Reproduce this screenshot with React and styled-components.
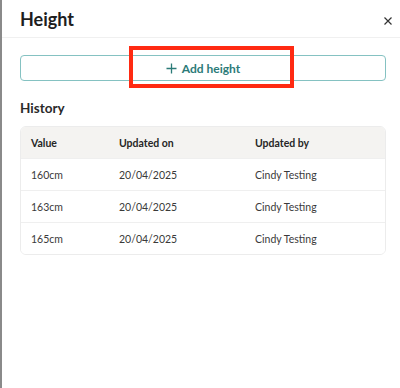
import React from 'react'
import styled, { createGlobalStyle } from 'styled-components'

const Global = createGlobalStyle`
  html, body { margin: 0; padding: 0; background: #fff; }
  body { font-family: Lato, "Noto Sans", sans-serif; color: #222; }
`

const Panel = styled.div`
  position: relative;
  width: 400px;
  height: 388px;
  box-sizing: border-box;
  border-left: 2px solid #8a8a8a;
  background: #fff;
`
const Head = styled.header`
  display: flex;
  align-items: center;
  justify-content: space-between;
  height: 38px;
  padding: 1px 6px 0 18px;
  box-sizing: border-box;
  border-bottom: 1px solid #f0f0f0;
`
const Title = styled.h1`
  margin: 0;
  font-size: 18px;
  font-weight: 700;
  color: #1e1e1e;
`
const Close = styled.button`
  border: none;
  background: none;
  padding: 0;
  margin-top: 4px;
  display: flex;
  color: #333;
`
const Body = styled.div`
  padding: 17px 14px 0 18px;
`
const AddBtn = styled.button`
  position: relative;
  width: 100%;
  height: 26px;
  display: flex;
  align-items: center;
  justify-content: center;
  gap: 5px;
  background: #fff;
  border: 1px solid #85c2c2;
  border-radius: 4px;
  color: #2c7b78;
  font-family: inherit;
  font-size: 12px;
  font-weight: 700;
`
const Highlight = styled.span`
  position: absolute;
  left: 108px;
  top: -10px;
  width: 157px;
  height: 34px;
  border: 4px solid #ff2a12;
`
const Section = styled.h2`
  margin: 19px 0 10px;
  font-size: 13.5px;
  font-weight: 700;
  color: #2a2a2a;
`
const Table = styled.div`
  border: 1px solid #ececec;
  border-radius: 6px;
  overflow: hidden;
`
const Row = styled.div`
  display: grid;
  grid-template-columns: 88px 136px 1fr;
  align-items: center;
  height: 31px;
  padding-left: 10px;
  font-size: 10.5px;
  color: ${p => (p.$head ? '#262626' : '#3a3a3a')};
  font-weight: ${p => (p.$head ? 700 : 400)};
  background: ${p => (p.$head ? '#f4f3f1' : '#fff')};
  & + & { border-top: 1px solid #efefef; }
`

const rows = [
  ['160cm', '20/04/2025', 'Cindy Testing'],
  ['163cm', '20/04/2025', 'Cindy Testing'],
  ['165cm', '20/04/2025', 'Cindy Testing'],
]

export default () => (
  <>
    <Global />
    <Panel>
      <Head>
        <Title>Height</Title>
        <Close>
          <svg width="12" height="12" viewBox="0 0 12 12">
            <path d="M2.5 2.5l7 7M9.5 2.5l-7 7" stroke="#333" strokeWidth="1.2" />
          </svg>
        </Close>
      </Head>
      <Body>
        <AddBtn>
          <svg width="11" height="11" viewBox="0 0 11 11">
            <path d="M5.5 0.5v10M0.5 5.5h10" stroke="#2c7b78" strokeWidth="1.3" />
          </svg>
          Add height
          <Highlight />
        </AddBtn>
        <Section>History</Section>
        <Table>
          <Row $head>
            <span>Value</span>
            <span>Updated on</span>
            <span>Updated by</span>
          </Row>
          {rows.map((r, i) => (
            <Row key={i}>
              {r.map((c, j) => <span key={j}>{c}</span>)}
            </Row>
          ))}
        </Table>
      </Body>
    </Panel>
  </>
)
